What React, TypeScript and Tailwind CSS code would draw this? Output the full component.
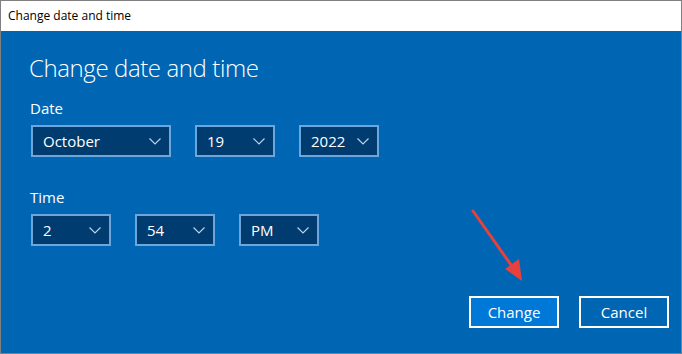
import { ReactNode } from "react";

const font = { fontFamily: '"Segoe UI", "Open Sans", "Noto Sans", sans-serif' };

function Chevron() {
  return (
    <svg width="12" height="7" viewBox="0 0 12 7" className="shrink-0">
      <polyline points="0.5,0.5 6,6 11.5,0.5" fill="none" stroke="#b9d3ee" strokeWidth="1.2" />
    </svg>
  );
}

function Select({ value, width }: { value: string; width: string }) {
  return (
    <div
      className={`${width} h-[32px] flex items-center justify-between pl-[10px] pr-[8px] border-2 border-[#6ea6dc] bg-[#003c6f] text-white text-[15px]`}
    >
      <span>{value}</span>
      <Chevron />
    </div>
  );
}

function Btn({ children, primary }: { children: ReactNode; primary?: boolean }) {
  return (
    <button
      className={`w-[90px] h-[32px] border-2 border-white text-white text-[15px] flex items-center justify-center ${
        primary ? "bg-[#0078d7]" : "bg-transparent"
      }`}
    >
      {children}
    </button>
  );
}

export default function App() {
  return (
    <div
      className="relative w-[682px] h-[354px] border border-[#808080] flex flex-col overflow-hidden"
      style={font}
    >
      <div className="h-[30px] shrink-0 bg-white flex items-center px-[7px] text-[12px] text-black">
        Change date and time
      </div>

      <div className="flex-1 bg-[#0066b3] flex flex-col pl-[28px] pr-[12px] pb-[25px] text-white">
        <h1 className="mt-[21px] text-[24px] leading-[32px] font-light tracking-[-0.4px]">Change date and time</h1>

        <div className="mt-[14px] text-[15px] leading-[20px] pl-[1px]">Date</div>
        <div className="mt-[7px] flex gap-[24px] pl-[2px]">
          <Select value="October" width="w-[140px]" />
          <Select value="19" width="w-[80px]" />
          <Select value="2022" width="w-[80px]" />
        </div>

        <div className="mt-[30px] text-[15px] leading-[20px] pl-[1px]">Time</div>
        <div className="mt-[7px] flex gap-[24px] pl-[2px]">
          <Select value="2" width="w-[80px]" />
          <Select value="54" width="w-[80px]" />
          <Select value="PM" width="w-[80px]" />
        </div>

        <div className="mt-auto flex justify-end gap-[20px]">
          <Btn primary>Change</Btn>
          <Btn>Cancel</Btn>
        </div>
      </div>

      {/* annotation arrow */}
      <svg className="absolute left-0 top-0 pointer-events-none" width="682" height="354">
        <line x1="472" y1="210" x2="515" y2="271" stroke="#e8403a" strokeWidth="3" strokeLinecap="round" />
        <polygon points="521,280 504,268 518,258" fill="#e8403a" />
      </svg>
    </div>
  );
}
